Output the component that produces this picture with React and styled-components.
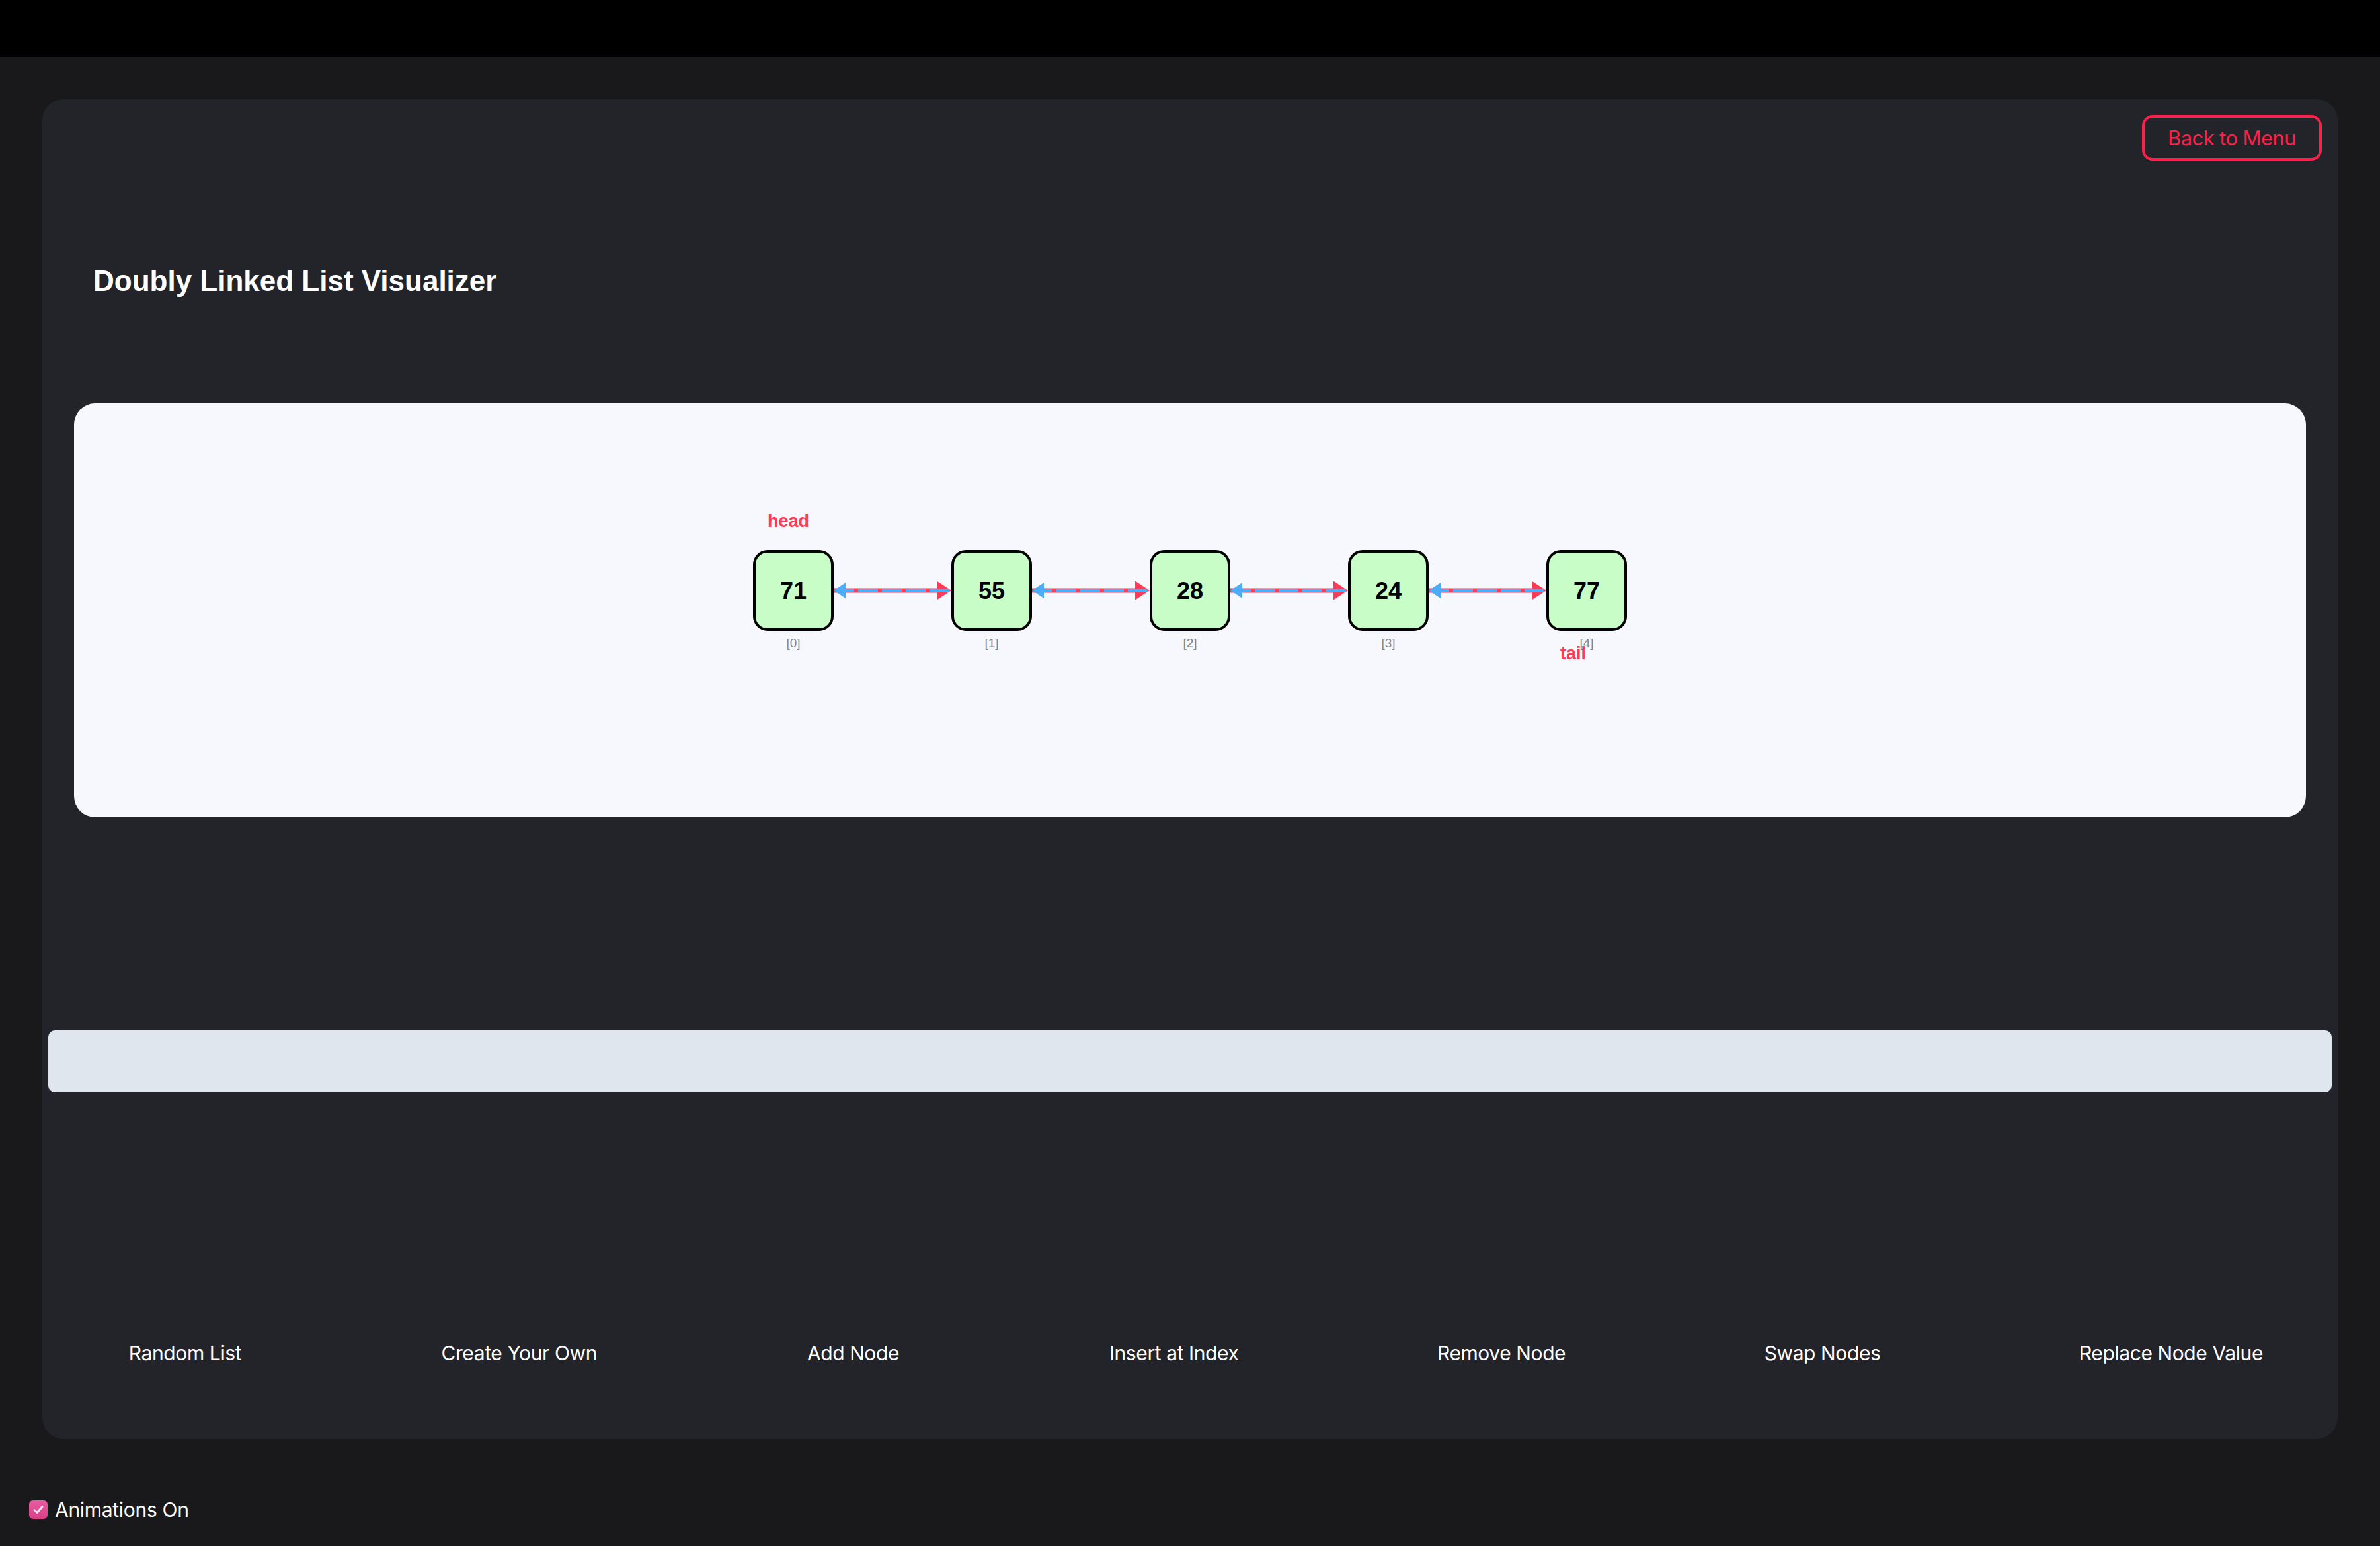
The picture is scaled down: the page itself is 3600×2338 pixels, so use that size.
import React from "react";
import styled, { createGlobalStyle } from "styled-components";

const GlobalStyle = createGlobalStyle`
  html, body {
    margin: 0;
    padding: 0;
    background: #19191b;
    font-family: Inter, "Noto Sans", sans-serif;
  }
`;

const values = [71, 55, 28, 24, 77];
const actions = [
  "Random List",
  "Create Your Own",
  "Add Node",
  "Insert at Index",
  "Remove Node",
  "Swap Nodes",
  "Replace Node Value",
];

const NODE_GAP = 300;
const HALF = 61;
const CY = 150;

const Diagram = () => (
  <DiagramSvg width="1500" height="300" viewBox="0 0 1500 300">
    {values.slice(0, -1).map((_, i) => {
      const cx = 150 + i * NODE_GAP;
      const left = cx + HALF;
      const right = cx + NODE_GAP - HALF;
      return (
        <g key={"l" + i}>
          <line x1={left} y1={CY} x2={right - 18} y2={CY} stroke="#ff3b55" strokeWidth="7" />
          <polygon points={`${right},${CY} ${right - 22},${CY - 14.5} ${right - 22},${CY + 14.5}`} fill="#ff3b55" />
          <line
            x1={right}
            y1={CY}
            x2={left + 12}
            y2={CY}
            stroke="#4dacf8"
            strokeWidth="4.5"
            strokeDasharray="30 6"
            strokeDashoffset="-3"
          />
          <polygon points={`${left},${CY} ${left + 18},${CY - 12} ${left + 18},${CY + 12}`} fill="#4dacf8" />
        </g>
      );
    })}
    {values.map((v, i) => {
      const cx = 150 + i * NODE_GAP;
      return (
        <g key={"n" + i}>
          <rect x={cx - 59} y={CY - 59} width="118" height="118" rx="20" fill="#c9fdc8" stroke="#000" strokeWidth="4" />
          <NodeValue x={cx} y={CY + 13} textAnchor="middle">{v}</NodeValue>
          <IndexLabel x={cx} y={CY + 86} textAnchor="middle">[{i}]</IndexLabel>
        </g>
      );
    })}
    <Pointer x={150 - 39} y={CY - 96}>head</Pointer>
    <Pointer x={150 + 4 * NODE_GAP - 40} y={CY + 104}>tail</Pointer>
  </DiagramSvg>
);

export default function App() {
  return (
    <>
      <GlobalStyle />
      <TopBar />
      <Main>
        <Panel>
          <Header>
            <BackButton>Back to Menu</BackButton>
          </Header>
          <Title>Doubly Linked List Visualizer</Title>
          <Canvas>
            <Diagram />
          </Canvas>
          <StatusBar />
          <ActionRow>
            {actions.map((a) => (
              <ActionButton key={a}>{a}</ActionButton>
            ))}
          </ActionRow>
        </Panel>
      </Main>
      <Footer>
        <CheckBox>
          <svg width="20" height="20" viewBox="0 0 20 20">
            <path d="M4 10.5 L8.2 14.5 L16 5.5" fill="none" stroke="#fde6f1" strokeWidth="3" strokeLinecap="round" strokeLinejoin="round" />
          </svg>
        </CheckBox>
        <FooterLabel>Animations On</FooterLabel>
      </Footer>
    </>
  );
}

const TopBar = styled.div`
  height: 86px;
  background: #000;
`;

const Main = styled.main`
  padding: 64px 64px 0;
`;

const Panel = styled.section`
  background: #232429;
  border-radius: 32px;
  padding: 24px 24px 0;
  height: 2026px;
  box-sizing: border-box;
  display: flex;
  flex-direction: column;
`;

const Header = styled.div`
  display: flex;
  justify-content: flex-end;
`;

const BackButton = styled.button`
  font-family: Inter, sans-serif;
  font-size: 31px;
  letter-spacing: -0.6px;
  line-height: 37px;
  color: #ff1f4b;
  background: transparent;
  border: 4px solid #ff1f4b;
  border-radius: 16px;
  padding: 12px 0;
  box-sizing: border-box;
  height: 69px;
  width: 272px;
  text-align: center;
  white-space: nowrap;
`;

const Title = styled.h2`
  margin: 157px 0 0 53px;
  font-family: "Liberation Sans", Arial, sans-serif;
  font-weight: 700;
  font-size: 44px;
  line-height: 50px;
  color: #fff;
`;

const Canvas = styled.div`
  margin: 160px 24px 0;
  height: 626px;
  background: #f7f8fd;
  border-radius: 32px;
  display: flex;
  justify-content: center;
  align-items: flex-start;
`;

const DiagramSvg = styled.svg`
  margin-top: 133px;
  overflow: visible;
`;

const NodeValue = styled.text`
  font-family: "Liberation Sans", Arial, sans-serif;
  font-weight: 700;
  font-size: 36px;
  fill: #000;
`;

const IndexLabel = styled.text`
  font-family: "Liberation Sans", Arial, sans-serif;
  font-size: 19px;
  fill: #858585;
`;

const Pointer = styled.text`
  font-family: "Liberation Sans", Arial, sans-serif;
  font-weight: 700;
  font-size: 27px;
  fill: #ff3b55;
`;

const StatusBar = styled.div`
  margin: 322px -15px 0 -15px;
  height: 94px;
  background: #dfe6ee;
  border-radius: 10px;
`;

const ActionRow = styled.div`
  margin-top: 364px;
  display: flex;
  justify-content: space-between;
  padding: 0 65px 0 81px;
`;

const ActionButton = styled.button`
  font-family: Inter, sans-serif;
  font-size: 30px;
  letter-spacing: -0.4px;
  line-height: 36px;
  color: #fff;
  background: transparent;
  border: none;
  padding: 12px 24px;
  min-width: 222px;
  text-align: center;
  white-space: nowrap;
`;

const Footer = styled.div`
  display: flex;
  align-items: center;
  gap: 11px;
  padding: 89px 0 0 44px;
`;

const CheckBox = styled.span`
  width: 28px;
  height: 28px;
  border-radius: 6px;
  background: linear-gradient(#ea5ba0, #d8418a);
  display: flex;
  align-items: center;
  justify-content: center;
`;

const FooterLabel = styled.span`
  font-size: 30px;
  letter-spacing: -0.3px;
  color: #fff;
`;
